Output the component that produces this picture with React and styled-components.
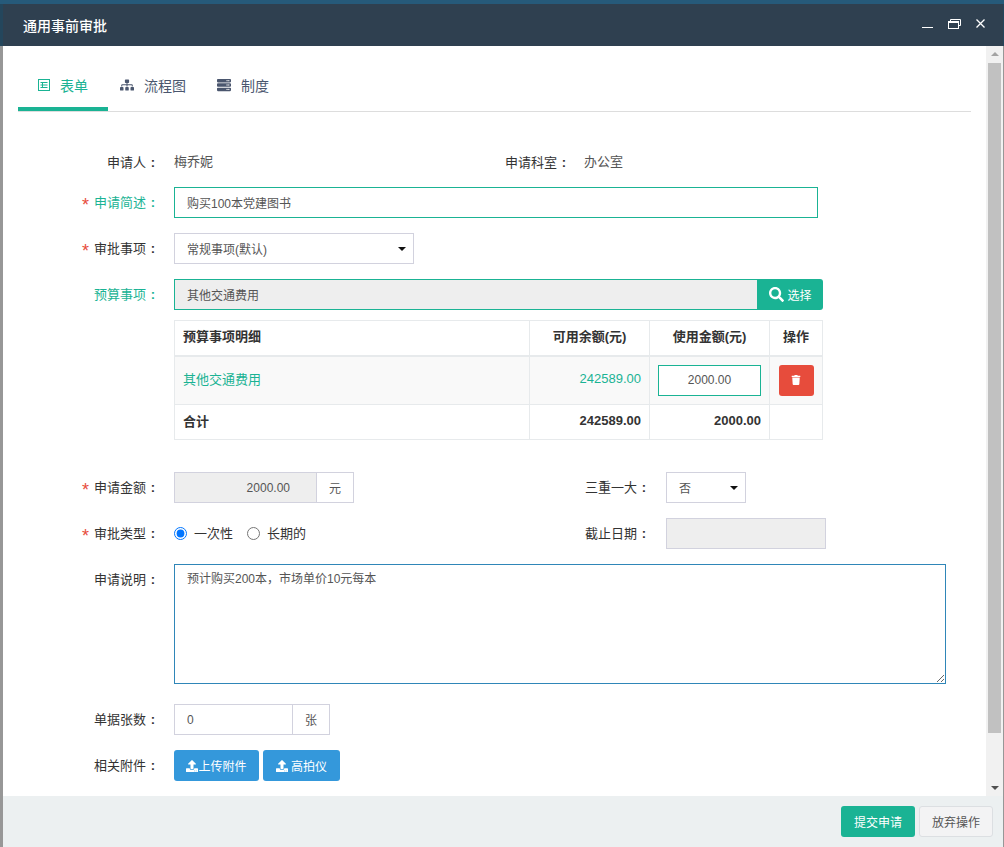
import React from 'react';
import styled, { createGlobalStyle } from 'styled-components';
import { FaSitemap, FaServer, FaSearch, FaTrash, FaUpload } from 'react-icons/fa';

const GREEN = '#1ab394';
const BLUE = '#3498db';
const LINE = '#d2d2de';
const FONT = '"Liberation Sans", "Noto Sans CJK SC", sans-serif';

const GlobalStyle = createGlobalStyle`
    html, body {
        margin: 0;
        height: 100%;
        background: #979797;
        overflow: hidden;
    }
    * {
        box-sizing: border-box;
    }
    body {
        font-family: ${FONT};
        font-size: 13px;
        color: #333;
    }
`;

const FormIcon = () => (
    <svg width="12" height="12" viewBox="0 0 12 12" fill="none" stroke={GREEN} strokeWidth="1">
        <rect x="0.5" y="0.5" width="11" height="11" />
        <path d="M2.5 3.5h7M2.5 6h7M2.5 8.5h7M4.5 3.5v5" />
    </svg>
);

const App = () => {
    return (
        <Page>
            <GlobalStyle />
            <Modal>
                <Header>
                    <Title>通用事前审批</Title>
                    <WindowTools>
                        <svg width="11" height="9" viewBox="0 0 11 9" stroke="#fff" strokeWidth="1">
                            <path d="M0 8.5h11" />
                        </svg>
                        <svg width="13" height="10" viewBox="0 0 13 10" fill="none" stroke="#fff" strokeWidth="1">
                            <rect x="0.5" y="2.5" width="10" height="7" />
                            <path d="M2.5 2.5V.5h10v6h-2" />
                            <path d="M0.5 3.5h10" />
                        </svg>
                        <svg width="9" height="9" viewBox="0 0 9 9" stroke="#fff" strokeWidth="1.3">
                            <path d="M.5 .5l8 8M8.5 .5l-8 8" />
                        </svg>
                    </WindowTools>
                </Header>
                <Body>
                    <Content>
                        <Tabs>
                            <Tab $active>
                                <FormIcon />
                                表单
                            </Tab>
                            <Tab>
                                <FaSitemap size={14} />
                                流程图
                            </Tab>
                            <Tab>
                                <FaServer size={14} />
                                制度
                            </Tab>
                        </Tabs>
                        <Form>
                            <Row>
                                <Label $compact>申请人<Colon>:</Colon></Label>
                                <Cell $compact $width={331}>梅乔妮</Cell>
                                <Label $compact $width={65}>申请科室<Colon>:</Colon></Label>
                                <Cell $compact>办公室</Cell>
                            </Row>
                            <Row>
                                <Label $required $focus>申请简述<Colon>:</Colon></Label>
                                <Input $width={644} $focus readOnly value="购买100本党建图书" />
                            </Row>
                            <Row>
                                <Label $required>审批事项<Colon>:</Colon></Label>
                                <Select $width={240}>
                                    常规事项(默认)
                                    <Caret />
                                </Select>
                            </Row>
                            <Row $bottom={10}>
                                <Label $focus>预算事项<Colon>:</Colon></Label>
                                <Input $width={584} $focus $disabled readOnly value="其他交通费用" />
                                <PickButton>
                                    <FaSearch size={15} />
                                    选择
                                </PickButton>
                            </Row>
                            <Table>
                                <colgroup>
                                    <col width="355" />
                                    <col width="120" />
                                    <col width="120" />
                                    <col width="53" />
                                </colgroup>
                                <thead>
                                    <tr>
                                        <Th>预算事项明细</Th>
                                        <Th $center>可用余额(元)</Th>
                                        <Th $center>使用金额(元)</Th>
                                        <Th $center>操作</Th>
                                    </tr>
                                </thead>
                                <tbody>
                                    <BudgetRow>
                                        <Td $green>其他交通费用</Td>
                                        <Td $green $right>242589.00</Td>
                                        <Td $right $control>
                                            <AmountInput readOnly value="2000.00" />
                                        </Td>
                                        <Td $center $control>
                                            <DeleteButton>
                                                <FaTrash size={10} />
                                            </DeleteButton>
                                        </Td>
                                    </BudgetRow>
                                    <TotalRow>
                                        <Td>合计</Td>
                                        <Td $right>242589.00</Td>
                                        <Td $right>2000.00</Td>
                                        <Td />
                                    </TotalRow>
                                </tbody>
                            </Table>
                            <Row>
                                <Label $required>申请金额<Colon>:</Colon></Label>
                                <Cell $width={382}>
                                    <Group>
                                        <Input $width={143} $disabled $right readOnly value="2000.00" />
                                        <Addon>元</Addon>
                                    </Group>
                                </Cell>
                                <Label $width={95} $gap={15}>三重一大<Colon>:</Colon></Label>
                                <Select $width={80}>
                                    否
                                    <Caret />
                                </Select>
                            </Row>
                            <Row>
                                <Label $required>审批类型<Colon>:</Colon></Label>
                                <Cell $width={382}>
                                    <RadioLabel>
                                        <Radio type="radio" name="kind" defaultChecked />
                                        一次性
                                    </RadioLabel>
                                    <RadioLabel>
                                        <Radio type="radio" name="kind" />
                                        长期的
                                    </RadioLabel>
                                </Cell>
                                <Label $width={95} $gap={15}>截止日期<Colon>:</Colon></Label>
                                <Input $width={160} $disabled readOnly value="" />
                            </Row>
                            <Row $bottom={20}>
                                <Label>申请说明<Colon>:</Colon></Label>
                                <Textarea readOnly value="预计购买200本，市场单价10元每本" />
                            </Row>
                            <Row>
                                <Label>单据张数<Colon>:</Colon></Label>
                                <Group>
                                    <Input $width={119} readOnly value="0" />
                                    <Addon>张</Addon>
                                </Group>
                            </Row>
                            <Row>
                                <Label>相关附件<Colon>:</Colon></Label>
                                <UploadButton $width={85}>
                                    <FaUpload size={12} />
                                    上传附件
                                </UploadButton>
                                <UploadButton $width={77} $gap={3}>
                                    <FaUpload size={12} />
                                    高拍仪
                                </UploadButton>
                            </Row>
                        </Form>
                    </Content>
                    <Scrollbar>
                        <ArrowUp />
                        <Thumb />
                        <ArrowDown />
                    </Scrollbar>
                </Body>
                <Footer>
                    <SubmitButton>提交申请</SubmitButton>
                    <CancelButton>放弃操作</CancelButton>
                </Footer>
            </Modal>
        </Page>
    )
};
export default App


const Page = styled.div`
    height: 847px;
    width: 1004px;
    padding: 4px 1px 0 3px;
    display: flex;
    flex-direction: column;
    overflow: hidden;
    background: linear-gradient(#265a7a 4px, #24465c 4px, #24465c 46px, #979797 46px);
`;

const Modal = styled.div`
    flex: 1;
    display: flex;
    flex-direction: column;
    background: #fff;
    min-height: 0;
`;

const Header = styled.div`
    height: 42px;
    flex: none;
    background: #2f4050;
    color: #fff;
    display: flex;
    align-items: center;
    justify-content: space-between;
    padding: 0 18px 0 20px;
`;

const Title = styled.div`
    font-size: 14px;
    font-weight: 500;
`;

const WindowTools = styled.div`
    display: flex;
    align-items: flex-start;
    gap: 15px;
    margin-top: -2px;
`;

const Body = styled.div`
    flex: 1;
    display: flex;
    min-height: 0;
`;

const Content = styled.div`
    flex: 1;
    min-width: 0;
    overflow: hidden;
    padding-top: 20px;
`;

const Tabs = styled.div`
    display: flex;
    height: 46px;
    width: 953px;
    margin-left: 15px;
    border-bottom: 1px solid #ddd;
`;

const Tab = styled.div`
    display: flex;
    align-items: center;
    gap: 10px;
    height: 45px;
    font-size: 14px;
    padding: ${(props) => (props.$active ? '0 20px 3px' : '0 19px 7px 12px')};
    color: ${(props) => (props.$active ? GREEN : '#4a566e')};
    border-bottom: ${(props) => (props.$active ? `4px solid ${GREEN}` : 'none')};
`;

const Form = styled.div`
    padding: 40px 0 0 15px;
`;

const Row = styled.div`
    display: flex;
    align-items: flex-start;
    margin-bottom: ${(props) => props.$bottom || 15}px;
`;

const Label = styled.label`
    flex: none;
    width: ${(props) => props.$width || 142}px;
    height: ${(props) => (props.$compact ? '20px' : '31px')};
    margin-right: ${(props) => props.$gap || 14}px;
    line-height: ${(props) => (props.$compact ? '22px' : '31px')};
    text-align: right;
    white-space: nowrap;
    color: ${(props) => (props.$focus ? GREEN : '#333')};
    ${(props) => props.$required && `
        &::before {
            content: '*';
            color: #e74c3c;
            font-size: 18px;
            line-height: 0;
            vertical-align: -4px;
            margin-right: 5px;
        }
    `}
`;

const Colon = styled.span`
    display: inline-block;
    width: 14px;
    text-align: center;
    font-weight: 700;
`;

const Cell = styled.div`
    flex: none;
    width: ${(props) => (props.$width ? `${props.$width}px` : 'auto')};
    height: ${(props) => (props.$compact ? '20px' : '31px')};
    padding-bottom: ${(props) => (props.$compact ? '3px' : '0')};
    display: flex;
    align-items: center;
    color: #555;
`;

const Input = styled.input`
    flex: none;
    width: ${(props) => props.$width}px;
    height: 31px;
    padding: 0 12px;
    font: inherit;
    font-size: 12px;
    color: #555;
    outline: none;
    border: 1px solid ${(props) => (props.$focus ? GREEN : LINE)};
    background: ${(props) => (props.$disabled ? '#eee' : '#fff')};
    text-align: ${(props) => (props.$right ? 'right' : 'left')};
    padding-right: ${(props) => (props.$right ? '26px' : '12px')};
`;

const Select = styled.div`
    flex: none;
    width: ${(props) => props.$width}px;
    height: 31px;
    padding: 0 7px 0 12px;
    border: 1px solid ${LINE};
    display: flex;
    align-items: center;
    justify-content: space-between;
    font-size: 12px;
    color: #555;
`;

const Caret = styled.span`
    width: 0;
    height: 0;
    border-left: 4px solid transparent;
    border-right: 4px solid transparent;
    border-top: 4px solid #111;
`;

const PickButton = styled.button`
    flex: none;
    width: 65px;
    height: 31px;
    padding: 0;
    border: none;
    border-radius: 0 3px 3px 0;
    background: ${GREEN};
    color: #fff;
    font: inherit;
    font-size: 12px;
    display: flex;
    align-items: center;
    justify-content: center;
    gap: 3px;
`;

const Table = styled.table`
    width: 648px;
    margin: 0 0 32px 156px;
    border-collapse: collapse;
    table-layout: fixed;
`;

const Th = styled.th`
    height: 35px;
    padding: 0 8px 5px;
    font-size: 13px;
    font-weight: 700;
    color: #333;
    text-align: ${(props) => (props.$center ? 'center' : 'left')};
    border: 1px solid #e7eaec;
    border-bottom-width: 2px;
`;

const Td = styled.td`
    padding: 0 8px ${(props) => (props.$control ? '0' : '3px')};
    color: ${(props) => (props.$green ? GREEN : 'inherit')};
    text-align: ${(props) => (props.$center ? 'center' : props.$right ? 'right' : 'left')};
    border: 1px solid #e7eaec;
`;

const BudgetRow = styled.tr`
    height: 49px;
    background: #f9f9f9;
`;

const TotalRow = styled.tr`
    height: 35px;
    font-weight: 700;
`;

const AmountInput = styled.input`
    width: 103px;
    height: 31px;
    border: 1px solid ${GREEN};
    padding: 0;
    text-align: center;
    font: inherit;
    font-size: 12px;
    color: #555;
    outline: none;
    display: block;
`;

const DeleteButton = styled.button`
    width: 35px;
    height: 31px;
    padding: 0;
    border: none;
    border-radius: 3px;
    background: #e74c3c;
    color: #fff;
    display: inline-flex;
    align-items: center;
    justify-content: center;
    vertical-align: middle;
`;

const Group = styled.div`
    display: flex;
`;

const Addon = styled.div`
    flex: none;
    width: 38px;
    height: 31px;
    margin-left: -1px;
    border: 1px solid ${LINE};
    display: flex;
    align-items: center;
    justify-content: center;
    font-size: 12px;
    color: #555;
`;

const RadioLabel = styled.label`
    display: flex;
    align-items: center;
    gap: 7px;
    margin-right: 14px;
    padding-bottom: 2px;
    color: #333;
`;

const Radio = styled.input`
    width: 13px;
    height: 13px;
    margin: 2px 0 0;
`;

const Textarea = styled.textarea`
    flex: none;
    width: 772px;
    height: 120px;
    padding: 4px 12px;
    border: 1px solid #2f86b8;
    font: inherit;
    font-size: 12px;
    line-height: 20px;
    color: #555;
    outline: none;
    resize: both;
    display: block;
`;

const UploadButton = styled.button`
    flex: none;
    width: ${(props) => props.$width}px;
    height: 31px;
    margin-right: 4px;
    padding: 0;
    border: none;
    border-radius: 3px;
    background: ${BLUE};
    color: #fff;
    font: inherit;
    font-size: 12px;
    display: flex;
    align-items: center;
    justify-content: center;
    gap: ${(props) => props.$gap || 0}px;
`;

const Scrollbar = styled.div`
    flex: none;
    width: 17px;
    padding: 0 2px;
    background: #f1f1f1;
    display: flex;
    flex-direction: column;
    align-items: stretch;
`;

const ArrowUp = styled.div`
    flex: none;
    width: 0;
    height: 0;
    margin: 6px auto 7px;
    border-left: 4px solid transparent;
    border-right: 4px solid transparent;
    border-bottom: 4px solid #a3a3a3;
`;

const Thumb = styled.div`
    height: 670px;
    background: #c1c1c1;
    flex: none;
`;

const ArrowDown = styled.div`
    flex: none;
    width: 0;
    height: 0;
    margin: auto auto 6px;
    border-left: 4px solid transparent;
    border-right: 4px solid transparent;
    border-top: 4px solid #505050;
`;

const Footer = styled.div`
    height: 51px;
    flex: none;
    background: #ecf0f1;
    display: flex;
    align-items: flex-start;
    justify-content: flex-end;
    gap: 4px;
    padding: 10px 10px 0 0;
`;

const SubmitButton = styled.button`
    width: 74px;
    height: 31px;
    padding: 0;
    border: none;
    border-radius: 3px;
    background: ${GREEN};
    color: #fff;
    font: inherit;
    font-size: 12px;
`;

const CancelButton = styled(SubmitButton)`
    background: #f3f3f4;
    border: 1px solid #dcdfe2;
    color: #555;
`;
